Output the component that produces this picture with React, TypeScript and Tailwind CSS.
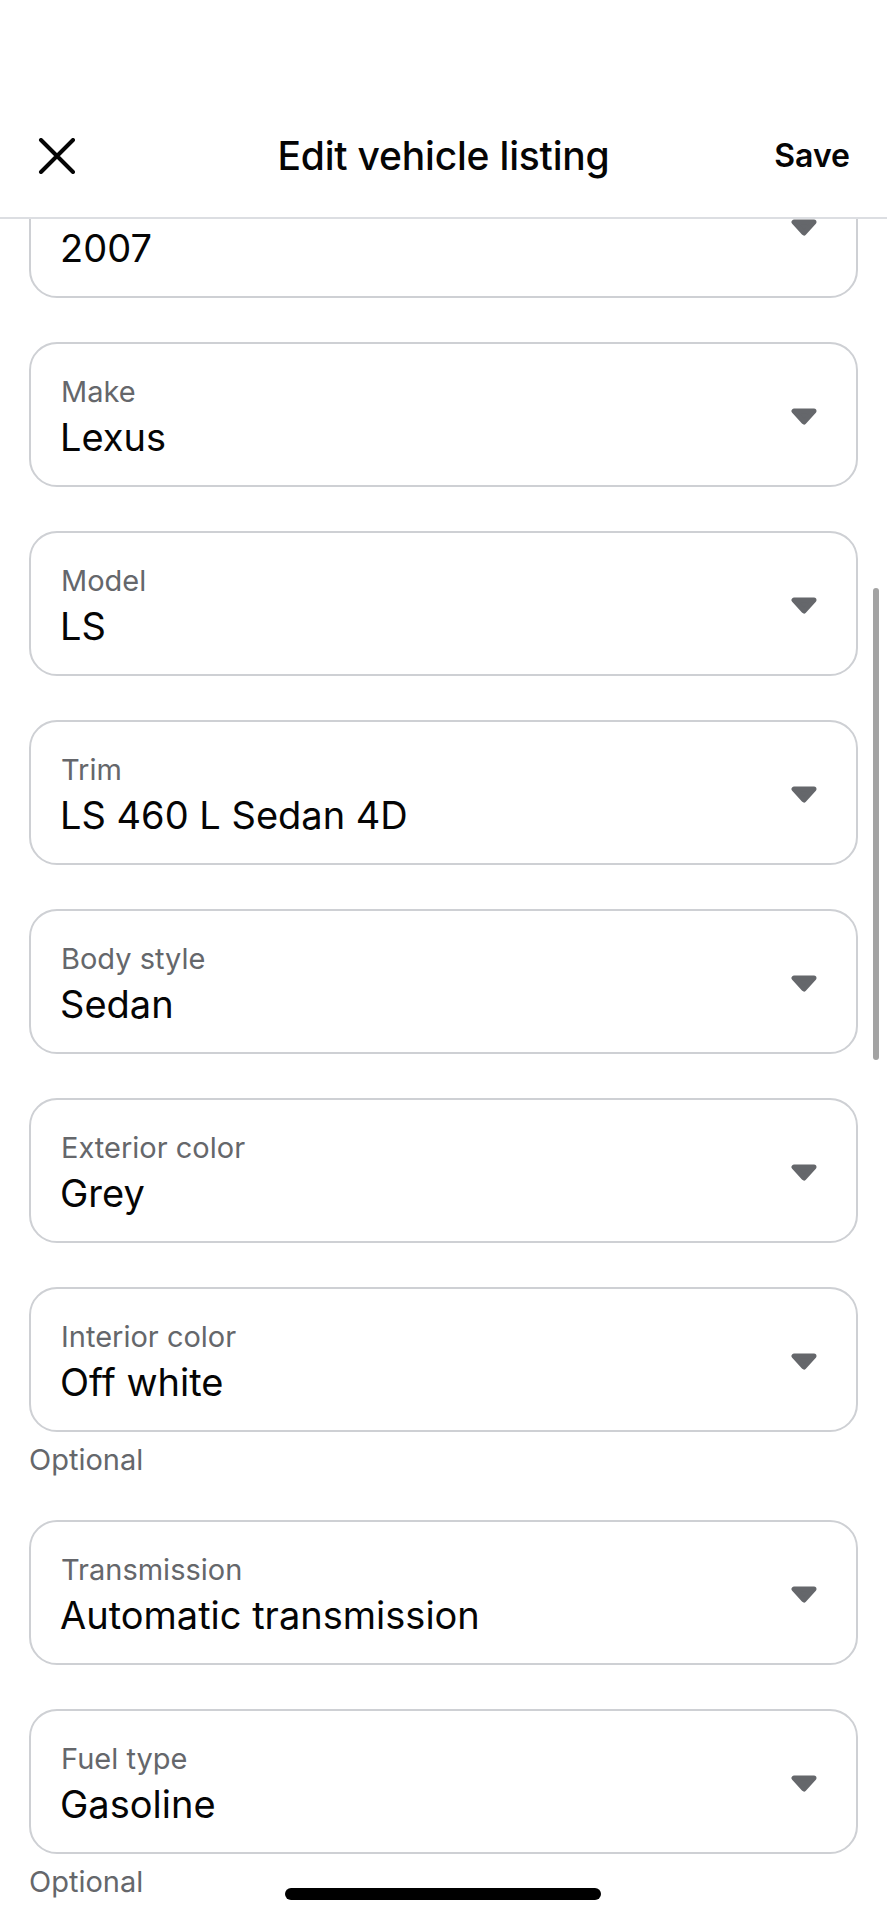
import React from "react";

type Field = { label: string; value: string; optional?: boolean };

const fields: Field[] = [
  { label: "", value: "2007" },
  { label: "Make", value: "Lexus" },
  { label: "Model", value: "LS" },
  { label: "Trim", value: "LS 460 L Sedan 4D" },
  { label: "Body style", value: "Sedan" },
  { label: "Exterior color", value: "Grey" },
  { label: "Interior color", value: "Off white", optional: true },
  { label: "Transmission", value: "Automatic transmission" },
  { label: "Fuel type", value: "Gasoline", optional: true },
];

function Caret() {
  return (
    <svg width="26" height="17" viewBox="0 0 26 17" className="mt-[4px]">
      <polygon
        points="3,3 23,3 13,14"
        fill="#65676b"
        stroke="#65676b"
        strokeWidth="5"
        strokeLinejoin="round"
      />
    </svg>
  );
}

function SelectField({ f }: { f: Field }) {
  return (
    <div>
      <div className="h-[145px] rounded-[28px] border-2 border-[#ced0d4] bg-white flex items-center pl-[29px] pr-[39px]">
        <div className="flex-1 self-start pt-[30px]">
          <div className="h-[36px] text-[29px] leading-[36px] text-[#65676b] pl-[1px]">{f.label}</div>
          <div className="mt-[4px] text-[38px] leading-[46px] text-[#050505]">{f.value}</div>
        </div>
        <Caret />
      </div>
      {f.optional && (
        <div className="mt-[12px] text-[29px] leading-[32px] text-[#65676b]">Optional</div>
      )}
    </div>
  );
}

export default function App() {
  return (
    <div
      className="relative w-[887px] h-[1920px] bg-white overflow-hidden"
      style={{ fontFamily: "Inter, 'Liberation Sans', sans-serif" }}
    >
      <header className="relative z-10 h-[219px] pt-[130px] border-b-2 border-[#dcdee2] bg-white">
        <div className="h-[52px] grid grid-cols-[1fr_auto_1fr] items-center px-[37px]">
          <div className="flex items-center">
            <svg width="38" height="36" viewBox="0 0 38 36" className="ml-[1px]">
              <path
                d="M3 2 L35 34 M35 2 L3 34"
                stroke="#050505"
                strokeWidth="4"
                strokeLinecap="round"
              />
            </svg>
          </div>
          <div className="text-[39px] leading-[52px] font-medium text-[#050505] tracking-[-0.2px]">
            Edit vehicle listing
          </div>
          <div className="flex justify-end">
            <span className="text-[32px] leading-[52px] font-semibold text-[#050505]">Save</span>
          </div>
        </div>
      </header>
      <main className="h-[1701px] overflow-hidden">
        <div className="-mt-[66px] px-[29px] flex flex-col gap-[44px]">
          {fields.map((f, i) => (
            <SelectField key={i} f={f} />
          ))}
        </div>
      </main>
      <div className="absolute left-[873px] top-[588px] w-[6px] h-[472px] rounded-full bg-[#a3a3a3]" />
      <div className="absolute left-[285px] top-[1888px] w-[316px] h-[12px] rounded-full bg-black" />
    </div>
  );
}
